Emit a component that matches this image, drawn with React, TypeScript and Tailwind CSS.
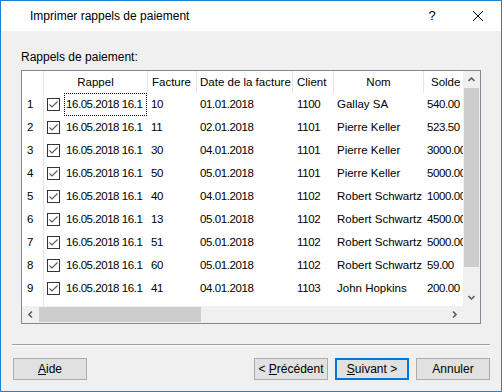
import React from "react";

const rows = [
  ["1", "10", "01.01.2018", "1100", "Gallay SA", "540.00"],
  ["2", "11", "02.01.2018", "1101", "Pierre Keller", "523.50"],
  ["3", "30", "04.01.2018", "1101", "Pierre Keller", "3000.00"],
  ["4", "50", "05.01.2018", "1101", "Pierre Keller", "5000.00"],
  ["5", "40", "04.01.2018", "1102", "Robert Schwartz", "1000.00"],
  ["6", "13", "05.01.2018", "1102", "Robert Schwartz", "4500.00"],
  ["7", "51", "05.01.2018", "1102", "Robert Schwartz", "5000.00"],
  ["8", "60", "05.01.2018", "1102", "Robert Schwartz", "59.00"],
  ["9", "41", "04.01.2018", "1103", "John Hopkins", "200.00"],
];

function Check() {
  return (
    <svg width="13" height="13" viewBox="0 0 13 13" className="shrink-0">
      <rect x="0.5" y="0.5" width="12" height="12" fill="#fff" stroke="#333" />
      <path d="M2.5 6.5 L5 9 L10.5 3.5" fill="none" stroke="#5a5a5a" strokeWidth="1.1" />
    </svg>
  );
}

function Chevron({ dir }: { dir: "up" | "down" | "left" | "right" }) {
  const d =
    dir === "up"
      ? "M0.5 4 L3.5 1 L6.5 4"
      : dir === "down"
      ? "M0.5 1 L3.5 4 L6.5 1"
      : dir === "left"
      ? "M4 0.5 L1 3.5 L4 6.5"
      : "M1 0.5 L4 3.5 L1 6.5";
  const w = dir === "up" || dir === "down" ? 7 : 5;
  const h = dir === "up" || dir === "down" ? 5 : 7;
  return (
    <svg width={w} height={h} viewBox={`0 0 ${w} ${h}`}>
      <path d={d} fill="none" stroke="#606060" strokeWidth="1.6" />
    </svg>
  );
}

export default function App() {
  const font = { fontFamily: '"Liberation Sans", Arial, sans-serif' };
  return (
    <div
      className="w-[502px] h-[392px] border border-[#1883d7] bg-[#f0f0f0] flex flex-col text-black overflow-hidden"
      style={font}
    >
      {/* title bar */}
      <div className="h-[30px] bg-white flex items-center shrink-0">
        <div className="pl-[29px] text-[12px] flex-1">Imprimer rappels de paiement</div>
        <div className="w-[46px] text-[13px] flex justify-center">?</div>
        <div className="w-[46px] flex justify-center pr-[1px]">
          <svg width="10" height="10" viewBox="0 0 10 10">
            <path d="M0 0 L10 10 M10 0 L0 10" stroke="#000" strokeWidth="1" />
          </svg>
        </div>
      </div>

      {/* body */}
      <div className="flex-1 flex flex-col">
        <div className="mt-[19px] ml-[20px] text-[12px] leading-[15px]">Rappels de paiement:</div>

        <div className="mt-[5px] ml-[20px] w-[460px] h-[254px] border border-[#828790] bg-white flex flex-col">
          <div className="flex h-[235px]">
            <div className="flex-1 flex flex-col overflow-hidden text-[11.5px]">
              {/* header */}
              <div className="flex h-[22px] items-center whitespace-nowrap">
                <div className="w-[22px] h-full border-r border-[#e5e5e5] shrink-0" />
                <div className="w-[104px] h-full border-r border-[#e5e5e5] shrink-0 flex items-center justify-center pt-[1px]">Rappel</div>
                <div className="w-[49px] h-full border-r border-[#e5e5e5] shrink-0 flex items-center pl-[4px] overflow-hidden pt-[1px]">Facture</div>
                <div className="w-[96px] h-full border-r border-[#e5e5e5] shrink-0 flex items-center pl-[3px] overflow-hidden pt-[1px]">Date de la facture</div>
                <div className="w-[41px] h-full border-r border-[#e5e5e5] shrink-0 flex items-center pl-[4px] overflow-hidden pt-[1px]">Client</div>
                <div className="w-[90px] h-full border-r border-[#e5e5e5] shrink-0 flex items-center justify-center pt-[1px]">Nom</div>
                <div className="flex-1 h-full flex items-center pl-[7px] overflow-hidden pt-[1px]">Solde</div>
              </div>
              {/* rows */}
              {rows.map((r, i) => (
                <div key={i} className="flex h-[23px] items-center whitespace-nowrap">
                  <div className="w-[22px] h-full border-r border-[#e5e5e5] shrink-0 flex items-center pl-[5px]">{r[0]}</div>
                  <div className="w-[104px] h-full shrink-0 flex items-center pl-[3px] gap-[4px] overflow-hidden">
                    <Check />
                    <div
                      className={
                        "h-full flex items-center overflow-hidden w-[83px] pl-[1px] tracking-[-0.45px] " +
                        (i === 0 ? "border border-dotted border-black" : "border border-transparent")
                      }
                    >
                      16.05.2018 16.1
                    </div>
                  </div>
                  <div className="w-[49px] shrink-0 pl-[3px] overflow-hidden tracking-[-0.4px]">{r[1]}</div>
                  <div className="w-[96px] shrink-0 pl-[3px] overflow-hidden tracking-[-0.4px]">{r[2]}</div>
                  <div className="w-[41px] shrink-0 pl-[4px] overflow-hidden tracking-[-0.4px]">{r[3]}</div>
                  <div className="w-[90px] shrink-0 pl-[3px] overflow-hidden">{r[4]}</div>
                  <div className="flex-1 pl-[3px] overflow-hidden tracking-[-0.4px]">{r[5]}</div>
                </div>
              ))}
              <div className="flex-1 flex">
                <div className="w-[22px] border-r border-[#e5e5e5]" />
              </div>
            </div>
            {/* vertical scrollbar */}
            <div className="w-[17px] bg-[#f0f0f0] flex flex-col shrink-0">
              <div className="h-[17px] flex items-center justify-center">
                <Chevron dir="up" />
              </div>
              <div className="flex-1 flex flex-col px-[1px]">
                <div className="h-[179px] bg-[#cdcdcd]" />
              </div>
              <div className="h-[17px] flex items-center justify-center">
                <Chevron dir="down" />
              </div>
            </div>
          </div>
          {/* horizontal scrollbar */}
          <div className="h-[17px] flex bg-[#f0f0f0]">
            <div className="w-[17px] flex items-center justify-center">
              <Chevron dir="left" />
            </div>
            <div className="flex-1 py-[1px]">
              <div className="w-[162px] h-full bg-[#cdcdcd]" />
            </div>
            <div className="w-[17px] flex items-center justify-center">
              <Chevron dir="right" />
            </div>
            <div className="w-[17px] bg-[#f0f0f0]" />
          </div>
        </div>

        {/* separator */}
        <div className="mt-[20px] ml-[11px] w-[478px] h-[2px] border-t border-[#a0a0a0] border-b border-b-white" />

        {/* buttons */}
        <div className="mt-[12px] flex pl-[12px] pr-[11px] text-[12px]">
          <button className="w-[74px] h-[22px] bg-[#e1e1e1] border border-[#adadad] flex items-center justify-center">
            <span><span className="underline">A</span>ide</span>
          </button>
          <div className="flex-1" />
          <button className="w-[74px] h-[22px] bg-[#e1e1e1] border border-[#adadad] flex items-center justify-center">
            <span>&lt; <span className="underline">P</span>récédent</span>
          </button>
          <button className="ml-[7px] w-[74px] h-[22px] bg-[#e1e1e1] border-2 border-[#0078d7] flex items-center justify-center">
            <span><span className="underline">S</span>uivant &gt;</span>
          </button>
          <button className="ml-[7px] w-[74px] h-[22px] bg-[#e1e1e1] border border-[#adadad] flex items-center justify-center">
            Annuler
          </button>
        </div>
      </div>
    </div>
  );
}
